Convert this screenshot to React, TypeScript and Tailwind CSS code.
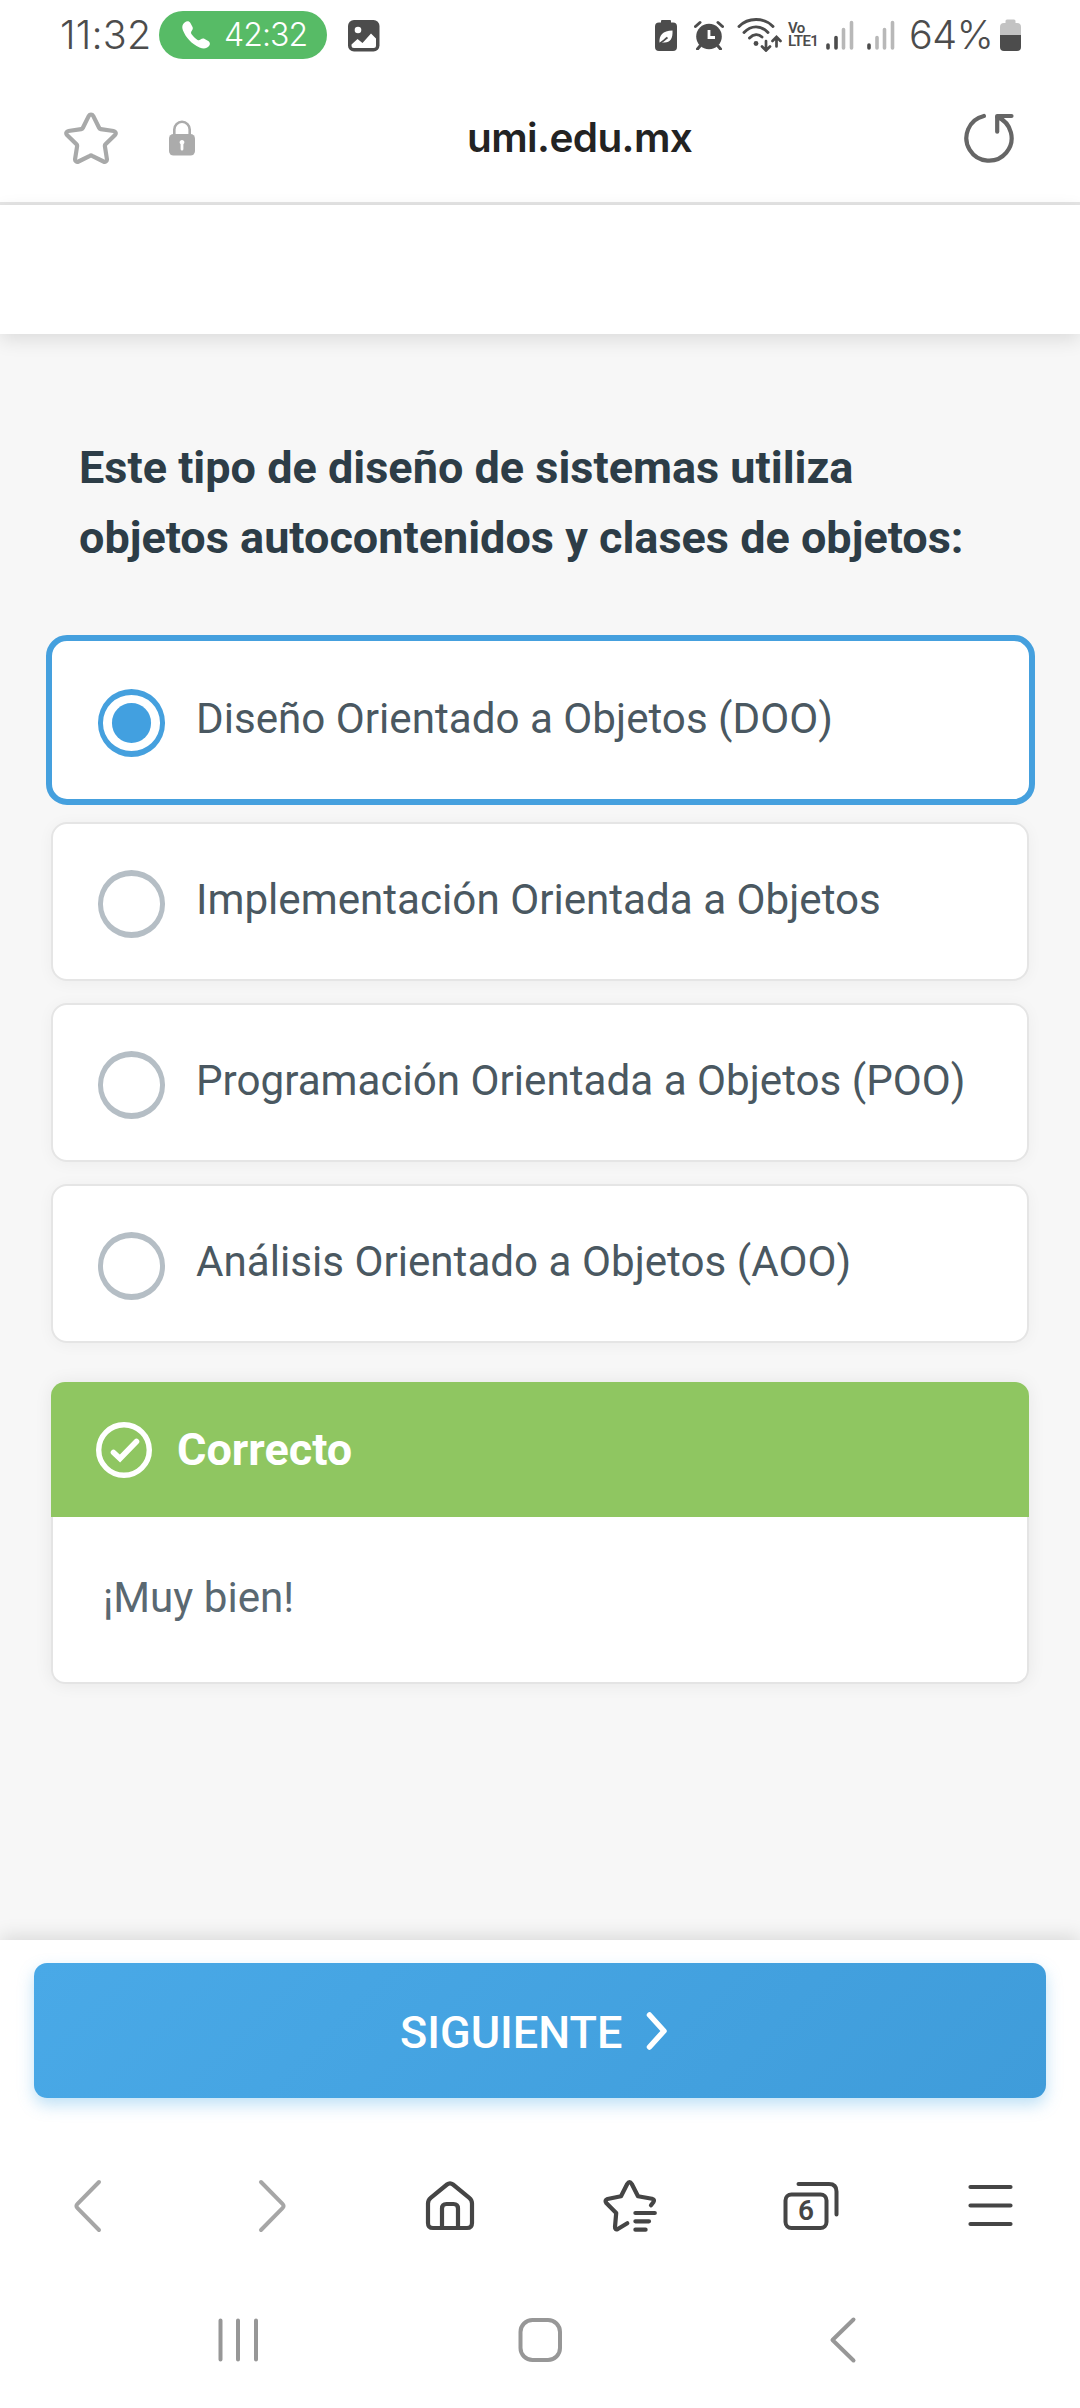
import React from "react";

const OPTIONS = [
  "Diseño Orientado a Objetos (DOO)",
  "Implementación Orientada a Objetos",
  "Programación Orientada a Objetos (POO)",
  "Análisis Orientado a Objetos (AOO)",
];

const STAR = "M27 3.5c1 0 1.700.5 2.200 1.400l6 12.100c.3.600.9 1 1.600 1.100l12.800 1.900c2 .3 2.800 2.500 1.400 3.900l-9.500 9.400c-.5.5-.700 1.200-.6 1.900l2 12.800c.3 2-1.600 3.400-3.400 2.500l-11.400-5.700c-.7-.4-1.500-.4-2.200 0l-11.400 5.700c-1.800.9-3.700-.5-3.400-2.500l2-12.800c.1-.7-.1-1.400-.6-1.900L3 23.900c-1.400-1.400-.6-3.600 1.400-3.900l12.800-1.900c.7-.1 1.300-.5 1.600-1.100l6-12.100C25.300 4 26 3.500 27 3.500z";

function StatusBar() {
  return (
    <header className="flex h-[70px] items-start pl-[60px] pr-[59px] font-['Inter'] text-[#4c4c4c]">
      <span className="mt-[11px] w-[99px] whitespace-nowrap text-[39.500px] font-light leading-[48px] tracking-[0.2px]">11:32</span>
      <div className="mt-[11px] flex h-12 w-[168px] items-center rounded-full bg-[#57bb66] pl-[23px] text-white">
        <svg width="28" height="28" viewBox="0 0 28 28" className="shrink-0">
          <path fill="currentColor" d="M3 1.200C4.800-.2 7.300-.1 8.400 2l2 3.700c.8 1.500.4 2.900-.6 4.100-1 1.200-1 2.300-.2 3.500 1.600 2.200 3.400 4.100 5.600 5.500 1.300.8 2.200.7 3.300-.2 1.400-1.200 2.700-1.500 4.200-.700l3.500 2c1.900 1.100 2.200 3.400.8 5.200-2.100 2.700-5.600 3.200-9.500 1.400C9.600 22.900 3.900 16.600 1 9.500-.4 6.100.3 3.200 3 1.200z" />
        </svg>
        <span className="ml-[14px] whitespace-nowrap text-[32px] font-[350] leading-none tracking-[-0.9px]">42:32</span>
      </div>
      <svg width="32" height="32" viewBox="0 0 32 32" className="ml-[21px] mt-5">
        <rect width="31.500" height="31.500" rx="6" fill="currentColor" />
        <circle cx="10" cy="10" r="3.300" fill="#fff" />
        <path d="M3.500 24.500l6-5.500 5 4 8.500-9.500 5 5v7q0 2.500-2.500 2.500h-19.500q-2.500 0-2.500-2.500z" fill="#fff" />
      </svg>
      <div className="ml-auto flex items-start">
        <svg width="22" height="32" viewBox="0 0 22 32" className="mt-[19px]">
          <path d="M6 3.500V2q0-1 1-1h8q1 0 1 1v1.500h2q4 0 4 4V28q0 4-4 4H4q-4 0-4-4V7.500q0-4 4-4z" fill="currentColor" />
          <path d="M4.500 24c-.5-8 3-12 13-12.500.5 8.500-2.500 12.500-9 12z" fill="#fff" />
          <path d="M2.500 25.500c4-1.500 6-4 10-7" stroke="currentColor" strokeWidth="1.800" fill="none" />
        </svg>
        <svg width="30" height="30" viewBox="0 0 30 30" className="ml-[17px] mt-5" fill="none" stroke="currentColor" strokeLinecap="round">
          <circle cx="15" cy="16.500" r="12.800" fill="currentColor" stroke="none" />
          <path d="M1.500 6.500L6 2.500M28.500 6.500L24 2.500M6 26l-2.500 3M24 26l2.500 3" strokeWidth="3" />
          <path d="M15 10v7.500h6" stroke="#fff" strokeWidth="2.800" strokeLinecap="butt" />
        </svg>
        <svg width="46" height="34" viewBox="0 0 46 34" className="ml-[13px] mt-[18px]" fill="none" stroke="currentColor" strokeWidth="2.900" strokeLinecap="round">
          <path d="M2 8.500C11-.9 27-.9 36 8.500M7 14.500c7-7.500 17-7.500 24 0M12.500 20c4-4 9-4.200 12.500-1" />
          <circle cx="19" cy="25.500" r="2.400" fill="currentColor" stroke="none" />
          <path d="M29 23v9M25 28.500l4 4 4-4M39.500 28.500v-9M35.500 23l4-4 4 4" strokeWidth="2.700" />
        </svg>
        <div className="ml-[5px] mt-[22px] w-[38px] font-['Roboto'] text-[15px] font-semibold leading-[13px] tracking-[-0.6px]">
          <div>Vo</div>
          <div>LTE1</div>
        </div>
        <svg width="28" height="30" viewBox="0 0 28 30" className="mt-5" strokeWidth="3.600" strokeLinecap="round">
          <path d="M2 25v3M10 17.500V28" stroke="#4c4c4c" />
          <path d="M17.500 9.500V28M25.500 2.500V28" stroke="#b8b8b8" />
        </svg>
        <svg width="28" height="30" viewBox="0 0 28 30" className="ml-[13px] mt-5" strokeWidth="3.600" strokeLinecap="round">
          <path d="M2 25v3" stroke="#4c4c4c" />
          <path d="M10 17.500V28M17.500 9.500V28M25.500 2.500V28" stroke="#b8b8b8" />
        </svg>
        <span className="ml-[14px] mt-[11px] w-[91px] whitespace-nowrap text-[39.500px] font-light leading-[48px] tracking-[-0.4px]">64%</span>
        <svg width="21" height="32" viewBox="0 0 21 32" className="mt-[19px]">
          <path d="M5.500 4V2q0-1.500 1.500-1.500h7q1.500 0 1.500 1.500v2H17q4 0 4 4v8H0V8q0-4 4-4z" fill="#c3c3c3" />
          <path d="M0 16h21v12q0 4-4 4H4q-4 0-4-4z" fill="currentColor" />
        </svg>
      </div>
    </header>
  );
}

function AddressBar() {
  return (
    <div className="flex h-[135px] items-start border-b-[3px] border-[#e5e5e5] pl-16 pr-[65px]">
      <svg width="54" height="54" viewBox="0 0 54 54" className="mt-[41px]" fill="none" stroke="#a8a9a9" strokeWidth="4.200">
        <path d={STAR} />
      </svg>
      <svg width="26" height="36" viewBox="0 0 26 36" className="ml-[51px] mt-[50px]">
        <path d="M5.300 15V9.500a7.700 7.700 0 0 1 15.400 0V15" fill="none" stroke="#ababab" strokeWidth="2.600" />
        <rect y="14" width="26" height="21.500" rx="4.500" fill="#ababab" />
        <path d="M13 20a2.300 2.300 0 0 1 1.400 4.200V29q0 1.500-1.400 1.500T11.600 29v-4.800A2.300 2.300 0 0 1 13 20z" fill="#fff" />
      </svg>
      <div className="mt-[43px] flex-1 pl-[272px] font-['Inter'] text-[40.500px] font-semibold leading-[50px] tracking-[-0.6px] text-[#232323]">umi.edu.mx</div>
      <svg width="52" height="52" viewBox="0 0 52 52" className="mt-[42px]" fill="none" stroke="#666" strokeWidth="4.200" strokeLinecap="round" strokeLinejoin="round">
        <path d="M20.900 4A22.600 22.600 0 1 0 34.300 5" />
        <path d="M48.500 4H34.200v15.700" />
      </svg>
    </div>
  );
}

function Option({ label, selected }: { label: string; selected: boolean }) {
  return (
    <label
      className={
        selected
          ? "relative -mx-[5.500px] -mt-1.5 -mb-[5px] flex h-[170px] items-start rounded-[21px] border-6 border-[#45a0de] bg-white pl-[46.500px] pt-12"
          : "flex h-[159px] items-start rounded-[16px] border-2 border-[#e5e5e5] bg-white pl-[45px] pt-[46px] shadow-[0_2px_16px_rgba(0,0,0,0.045)]"
      }
    >
      <span className={selected ? "flex h-[68px] w-[67px] items-center justify-center rounded-full border-x-5 border-y-6 border-[#45a0de]" : "h-[68px] w-[67px] rounded-full border-x-5 border-y-6 border-[#b5bec5]"}>
        {selected && <span className="h-10 w-[39px] rounded-full bg-[#42a0e0]" />}
      </span>
      <span className="ml-[31px] mt-[2px] whitespace-nowrap text-[42.160px] leading-[56px] text-[#4a5861]">{label}</span>
    </label>
  );
}

function Feedback() {
  return (
    <section className="mt-[39px] rounded-[14px] shadow-[0_0_18px_rgba(0,0,0,0.07)]">
      <div className="flex h-[135px] items-center rounded-t-[14px] bg-[#8fc661] pl-[45px] text-white">
        <svg width="56" height="56" viewBox="0 0 56 56" fill="none" stroke="currentColor">
          <circle cx="28" cy="28" r="25.300" strokeWidth="5.400" />
          <path d="M17.500 30.500l6.500 6 16.500-17" strokeWidth="5.600" strokeLinecap="round" />
        </svg>
        <span className="ml-[25px] text-[45px] font-bold leading-none">Correcto</span>
      </div>
      <div className="h-[167px] rounded-b-[14px] border-2 border-t-0 border-[#e4e4e4] bg-white pl-[50px] pt-[53px] text-[42.160px] leading-[56px] text-[#5a6871]">¡Muy bien!</div>
    </section>
  );
}

function BrowserNav() {
  return (
    <nav className="mt-[81px] flex h-[54px] items-center pl-[73px] pr-[67px]">
      <svg width="30" height="54" viewBox="0 0 30 54" fill="none" stroke="#a6a6a6" strokeWidth="4" strokeLinecap="round">
        <path d="M26 3L4.500 24.800q-2.200 2.200 0 4.400L26 51" />
      </svg>
      <svg width="30" height="54" viewBox="0 0 30 54" className="ml-[154px]" fill="none" stroke="#a6a6a6" strokeWidth="4" strokeLinecap="round">
        <path d="M4 3l21.500 21.800q2.200 2.200 0 4.400L4 51" />
      </svg>
      <svg width="50" height="54" viewBox="0 0 50 54" className="ml-[138px]" fill="none" stroke="#454545" strokeWidth="4.200" strokeLinejoin="round">
        <path d="M3 24.500q0-3.500 2.700-5.700L22 5.500q3-2.400 6 0l16.300 13.300Q47 21 47 24.500V44q0 5-5 5H8q-5 0-5-5z" />
        <path d="M17 49V29.500q0-4.500 4.500-4.500h7q4.500 0 4.500 4.500V49" />
      </svg>
      <svg width="56" height="54" viewBox="0 0 56 54" className="ml-[128px]" fill="none" stroke="#454545" strokeWidth="4.200" strokeLinecap="round" strokeLinejoin="round">
        <path d="M24.300 44.300L14.800 50q-3 1.300-2.800-2l1.200-14L3.300 24q-2-3 1.200-4L18 17.300 24.200 5q2.300-4 4.600 0L35 17.300l14 2.400q3 .8 1.500 3.300l-2.500 3.300" />
        <path d="M32.400 34h19.400M32.400 42.300H46M32.400 50.700h10.200" />
      </svg>
      <div className="relative ml-[124px] h-[54px] w-[56px]">
        <svg width="56" height="54" viewBox="0 0 56 54" fill="none" stroke="#454545" strokeWidth="4" strokeLinecap="round">
          <rect x="2.500" y="15.500" width="41" height="33.500" rx="6" />
          <path d="M15.500 5H46q7.500 0 7.500 7.500v23" />
        </svg>
        <span className="absolute left-0 top-4 w-[46px] text-center text-[28px] font-semibold leading-[32px] text-[#454545]">6</span>
      </div>
      <svg width="45" height="54" viewBox="0 0 45 54" className="ml-auto" stroke="#454545" strokeWidth="4.200" strokeLinecap="round">
        <path d="M2.500 8h40M2.500 26.500h40M2.500 45h40" />
      </svg>
    </nav>
  );
}

function SystemNav() {
  return (
    <nav className="mt-[82px] flex h-[50px] items-center pl-[217px]">
      <svg width="42" height="50" viewBox="0 0 42 50" stroke="#979797" strokeWidth="4" strokeLinecap="round">
        <path d="M3.500 5.500v39M21 5.500v39M39 5.500v39" />
      </svg>
      <svg width="46" height="50" viewBox="0 0 46 50" className="ml-[258px]" fill="none" stroke="#979797" strokeWidth="4">
        <rect x="3.500" y="5" width="39.500" height="40" rx="12" />
      </svg>
      <svg width="28" height="50" viewBox="0 0 28 50" className="ml-[266px]" fill="none" stroke="#979797" strokeWidth="4" strokeLinecap="round" strokeLinejoin="round">
        <path d="M24.500 4.500L3.500 25l21 20.500" />
      </svg>
    </nav>
  );
}

export default function App() {
  return (
    <div className="flex h-[2408px] w-[1080px] flex-col overflow-hidden bg-white font-['Roboto'] text-[42px]">
      <StatusBar />
      <AddressBar />
      <div className="relative z-10 h-[129px] shrink-0 bg-white shadow-[0_6px_18px_rgba(0,0,0,0.11)]" />
      <main className="h-[1606px] shrink-0 bg-[#f7f7f7] px-[51px] pt-[99px]">
        <h1 className="ml-[28px] whitespace-nowrap text-[45px] font-bold leading-[70px] text-[#2d3d47]">
          Este tipo de diseño de sistemas utiliza
          <br />
          objetos autocontenidos y clases de objetos:
        </h1>
        <div className="mt-[68px] flex flex-col gap-[22px]">
          {OPTIONS.map((label, i) => (
            <Option key={label} label={label} selected={i === 0} />
          ))}
        </div>
        <Feedback />
      </main>
      <footer className="relative z-10 flex-1 bg-white pt-[23px] shadow-[0_-4px_18px_rgba(0,0,0,0.12)]">
        <button className="mx-[34px] flex h-[135px] w-[1012px] items-center rounded-[13px] bg-[linear-gradient(135deg,#49a9e7,#3f9cda)] pl-[366px] text-[45px] font-medium leading-none text-white shadow-[0_7px_16px_rgba(73,168,230,0.35)]">
          <span className="mt-1 w-[246px] text-left">SIGUIENTE</span>
          <svg width="22" height="40" viewBox="0 0 22 40" fill="none" stroke="currentColor" strokeWidth="5.500" strokeLinecap="round" strokeLinejoin="round">
            <path d="M3.500 4l14.500 16L3.500 36" />
          </svg>
        </button>
        <BrowserNav />
        <SystemNav />
      </footer>
    </div>
  );
}
